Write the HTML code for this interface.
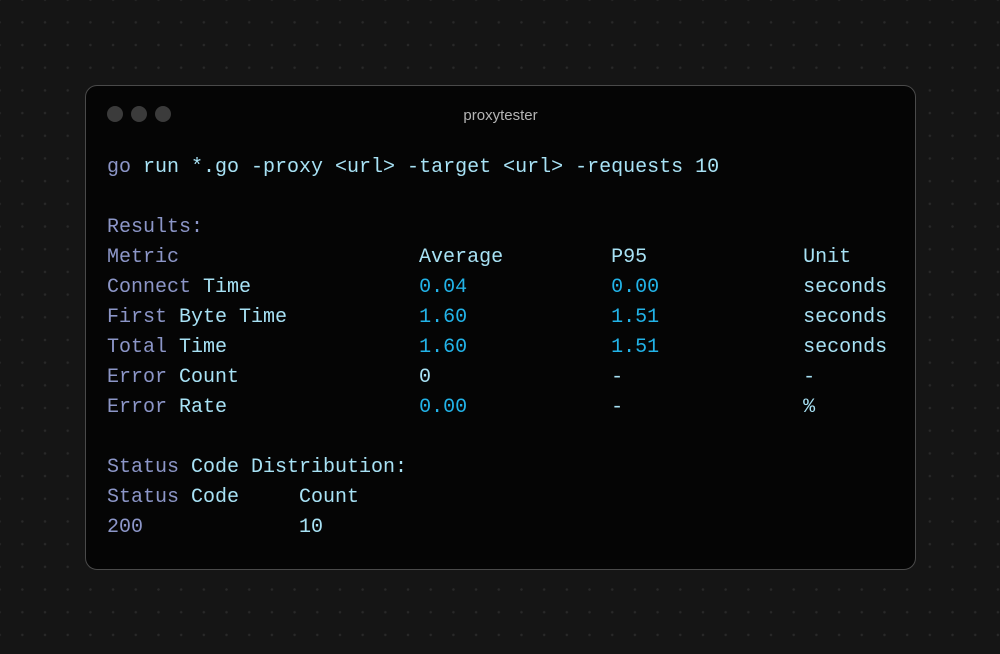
<!DOCTYPE html>
<html><head><meta charset="utf-8"><style>
html,body{margin:0;width:1000px;height:654px;overflow:hidden}
body{background-color:#151515;background-image:radial-gradient(circle,#292929 1px,transparent 1.5px);background-size:22.7px 22.7px;background-position:11px 11px;position:relative}
.win{position:absolute;left:85px;top:85px;width:829px;height:483px;border:1px solid #4a4a4a;border-radius:12px;background:#050505}
.d{position:absolute;top:20px;width:16px;height:16px;border-radius:50%;background:#3b3b3b}
.t{position:absolute;top:21px;left:0;width:100%;text-align:center;font:15px "Liberation Sans",sans-serif;color:#b5b5b5}
pre{position:absolute;left:21px;top:67px;margin:0;font:20px/30px "Liberation Mono",monospace;color:#a8e2f5}
.p{color:#8c96c8}.b{color:#22b3e8}
</style></head><body>
<div class="win">
<div class="d" style="left:21px"></div><div class="d" style="left:45px"></div><div class="d" style="left:69px"></div>
<div class="t">proxytester</div>
<pre><span class="p">go</span> run *.go -proxy &lt;url&gt; -target &lt;url&gt; -requests 10

<span class="p">Results:</span>
<span class="p">Metric</span>                    Average         P95             Unit
<span class="p">Connect</span> Time              <span class="b">0.04</span>            <span class="b">0.00</span>            seconds
<span class="p">First</span> Byte Time           <span class="b">1.60</span>            <span class="b">1.51</span>            seconds
<span class="p">Total</span> Time                <span class="b">1.60</span>            <span class="b">1.51</span>            seconds
<span class="p">Error</span> Count               0               -               -
<span class="p">Error</span> Rate                <span class="b">0.00</span>            -               %

<span class="p">Status</span> Code Distribution:
<span class="p">Status</span> Code     Count
<span class="p">200</span>             10</pre>
</div>
</body></html>
